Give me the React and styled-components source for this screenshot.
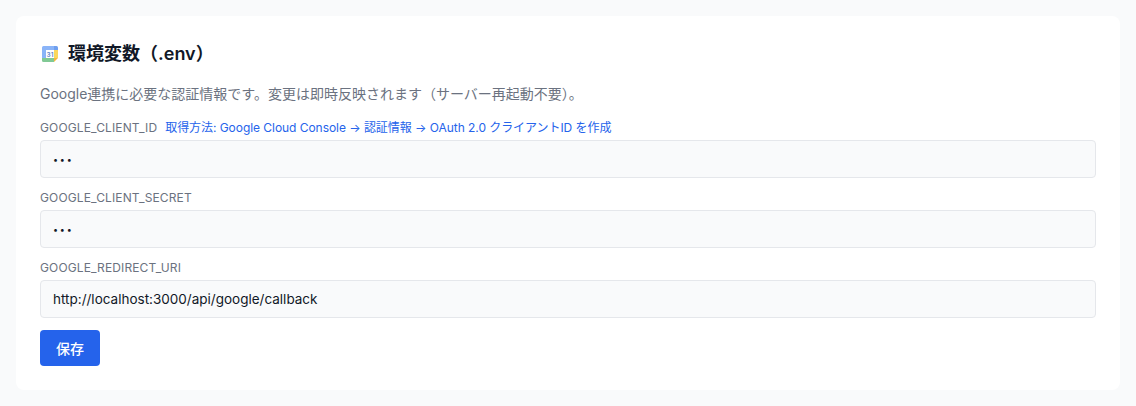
import React from "react";
import styled, { createGlobalStyle } from "styled-components";

const GlobalStyle = createGlobalStyle`
    html, body {
        margin: 0;
        padding: 0;
        background: #f9fafb;
    }
    body {
        font-family: Inter, "Noto Sans CJK JP", sans-serif;
        color: #111827;
    }
`;

const Page = styled.div`
    padding: 16px;
    height: 406px;
    box-sizing: border-box;
`;

const Card = styled.section`
    background: #ffffff;
    border-radius: 8px;
    padding: 24px;
    height: 374px;
    box-sizing: border-box;
`;

const Title = styled.h2`
    display: flex;
    align-items: center;
    gap: 8px;
    margin: 0;
    height: 28px;
    font-size: 18px;
    line-height: 28px;
    font-weight: 600;
    color: #111827;
`;

const Description = styled.p`
    margin: 16px 0 16px;
    font-size: 14px;
    line-height: 20px;
    color: #6b7280;
`;

const Field = styled.div`
    margin-top: 12px;
    &:first-of-type {
        margin-top: 0;
    }
`;

const LabelRow = styled.div`
    display: flex;
    align-items: center;
    gap: 8px;
    height: 16px;
    margin-bottom: 4px;
`;

const Label = styled.label`
    font-size: 12px;
    line-height: 16px;
    letter-spacing: 0.13px;
    color: #6b7280;
`;

const HelpLink = styled.a`
    font-size: 12px;
    line-height: 16px;
    letter-spacing: -0.05px;
    color: #2563eb;
    text-decoration: none;
`;

const Input = styled.input`
    display: block;
    width: 100%;
    height: 38px;
    box-sizing: border-box;
    padding: 8px 12px;
    font-family: inherit;
    font-size: ${(p) => (p.type === "password" ? "9px" : "13.5px")};
    letter-spacing: ${(p) => (p.type === "password" ? "1.8px" : "normal")};
    color: #111827;
    background: #f9fafb;
    border: 1px solid #e5e7eb;
    border-radius: 4px;
    outline: none;
`;

const SaveButton = styled.button`
    display: block;
    width: 60px;
    height: 36px;
    margin-top: 12px;
    padding: 0;
    font-family: inherit;
    font-size: 14px;
    font-weight: 500;
    color: #ffffff;
    background: #2563eb;
    border: none;
    border-radius: 4px;
`;

const CalendarIcon = () => (
    <svg width="20" height="20" viewBox="0 0 20 20" aria-hidden="true">
        <rect x="2" y="2" width="16" height="16" rx="1.5" fill="#ffffff" />
        <path d="M3.5 2H14v4H6v8H2V3.5A1.5 1.5 0 0 1 3.5 2z" fill="#8ab4f8" />
        <path d="M14 2h2.5A1.5 1.5 0 0 1 18 3.5V6h-4z" fill="#6f9fee" />
        <path d="M14 6h4v8h-4z" fill="#fbd75b" />
        <path d="M2 14h12v4H3.5A1.5 1.5 0 0 1 2 16.5z" fill="#81c995" />
        <path d="M14 14h4l-4 4z" fill="#f6b73c" />
        <text x="10" y="12.6" fontSize="6.5" fontFamily="Inter, sans-serif" fontWeight="600" fill="#5f85c8" textAnchor="middle">31</text>
    </svg>
);

const fields = [
    { name: "GOOGLE_CLIENT_ID", type: "password", value: "abc", help: "取得方法: Google Cloud Console → 認証情報 → OAuth 2.0 クライアントID を作成" },
    { name: "GOOGLE_CLIENT_SECRET", type: "password", value: "abc" },
    { name: "GOOGLE_REDIRECT_URI", type: "text", value: "http://localhost:3000/api/google/callback" },
];

const App = () => (
    <>
        <GlobalStyle />
        <Page>
            <Card>
                <Title>
                    <CalendarIcon />
                    環境変数（.env）
                </Title>
                <Description>
                    Google連携に必要な認証情報です。変更は即時反映されます（サーバー再起動不要）。
                </Description>
                {fields.map((field) => (
                    <Field key={field.name}>
                        <LabelRow>
                            <Label htmlFor={field.name}>{field.name}</Label>
                            {field.help && <HelpLink href="#">{field.help}</HelpLink>}
                        </LabelRow>
                        <Input id={field.name} type={field.type} defaultValue={field.value} readOnly />
                    </Field>
                ))}
                <SaveButton type="button">保存</SaveButton>
            </Card>
        </Page>
    </>
);

export default App;
